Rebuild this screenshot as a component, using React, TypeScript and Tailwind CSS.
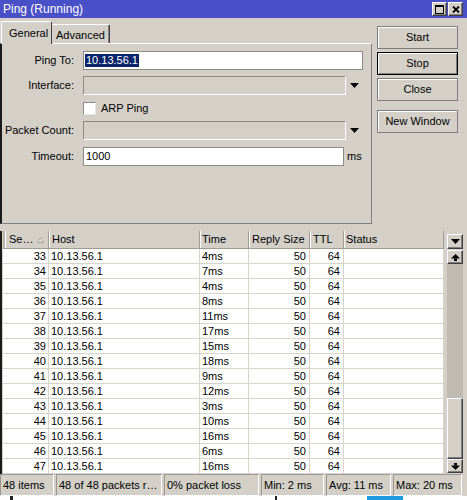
import React from "react";

const rows: [number, string][] = [
  [33, "4ms"], [34, "7ms"], [35, "4ms"], [36, "8ms"], [37, "11ms"],
  [38, "17ms"], [39, "15ms"], [40, "18ms"], [41, "9ms"], [42, "12ms"],
  [43, "3ms"], [44, "10ms"], [45, "16ms"], [46, "6ms"], [47, "16ms"],
];

const DropTri = () => (
  <svg width="9" height="5" viewBox="0 0 9 5" className="block">
    <polygon points="0,0 9,0 4.5,5" fill="#000" />
  </svg>
);

const ScrollArrow = ({ up }: { up?: boolean }) => (
  <svg width="9" height="7" viewBox="0 0 9 7" className="block">
    {up ? (
      <>
        <polygon points="4.5,0 9,4.5 0,4.5" fill="#000" />
        <rect x="3" y="4.5" width="3" height="2.5" fill="#000" />
      </>
    ) : (
      <>
        <rect x="3" y="0" width="3" height="2.5" fill="#000" />
        <polygon points="0,2.5 9,2.5 4.5,7" fill="#000" />
      </>
    )}
  </svg>
);

const raised =
  "border border-t-white border-l-white border-r-[#404040] border-b-[#404040] shadow-[inset_-1px_-1px_0_#808080]";

function FormButton({ label, focused }: { label: string; focused?: boolean }) {
  return (
    <div
      className={
        "h-[23px] w-[81px] flex items-center justify-center bg-[#d4d0c8] " +
        (focused
          ? "border border-black shadow-[inset_1px_1px_0_#fff,inset_-1px_-1px_0_#808080]"
          : "border border-[#7c7c7c] shadow-[inset_1px_1px_0_#fff]")
      }
    >
      {label}
    </div>
  );
}

export default function App() {
  return (
    <div className="w-[467px] h-[500px] bg-[#d4d0c8] flex flex-col overflow-hidden font-['Liberation_Sans',Arial,sans-serif] text-[11px] leading-none text-black select-none">
      {/* Title bar */}
      <div className="h-[18px] shrink-0 bg-[#4a50c8] flex items-center pl-[3px] pr-[4px]">
        <span className="text-white text-[12px]">Ping (Running)</span>
        <div className="ml-auto flex gap-[1px]">
          <div className={"w-[15px] h-[14px] bg-[#d4d0c8] flex items-center justify-center " + raised}>
            <svg width="9" height="9" viewBox="0 0 9 9" className="block">
              <rect x="0.5" y="0.5" width="8" height="8" fill="none" stroke="#000" />
              <rect x="0" y="0" width="9" height="2" fill="#000" />
            </svg>
          </div>
          <div className={"w-[15px] h-[14px] bg-[#d4d0c8] flex items-center justify-center " + raised}>
            <svg width="8" height="7" viewBox="0 0 8 7" className="block">
              <path d="M1 0.5 L7 6.5 M7 0.5 L1 6.5" stroke="#000" strokeWidth="1.8" />
            </svg>
          </div>
        </div>
      </div>

      {/* Top area */}
      <div className="flex h-[206px] shrink-0">
        <div className="w-[372px] flex flex-col">
          {/* Tabs */}
          <div className="h-[25px] flex items-end relative z-10">
            <div className="ml-[1px] w-[51px] h-[23px] -mb-px bg-[#d4d0c8] border-t border-l border-t-white border-l-white border-r border-r-[#404040] rounded-tl-[2px] rounded-tr-[2px] pl-[7px] pt-[6px]">
              General
            </div>
            <div className="w-[58px] h-[19px] bg-[#d4d0c8] border-t border-t-white border-r border-r-[#404040] shadow-[inset_-1px_0_0_#808080] rounded-tr-[2px] pl-[4px] pt-[5px]">
              Advanced
            </div>
          </div>
          {/* Panel */}
          <div className="h-[181px] border-t border-t-white border-r border-r-[#808080] border-b border-b-[#808080] border-l-2 border-l-[#1a1a1a] flex flex-col pt-[7px]">
            {/* Ping To */}
            <div className="flex items-center h-[19px]">
              <div className="w-[72px] text-right">Ping To:</div>
              <div className="ml-[9px] w-[280px] h-[19px] bg-white border border-[#8e8a83] flex items-center pl-[1px]">
                <span className="bg-[#0a246a] text-white px-[1px] h-[13px] flex items-center">10.13.56.1</span>
              </div>
            </div>
            {/* Interface */}
            <div className="flex items-center h-[19px] mt-[6px]">
              <div className="w-[72px] text-right">Interface:</div>
              <div className="ml-[9px] w-[263px] h-[19px] bg-[#d4d0c8] border border-t-[#8e8a83] border-l-[#8e8a83] border-r-white border-b-white" />
              <div className="ml-[4px]">
                <DropTri />
              </div>
            </div>
            {/* ARP Ping */}
            <div className="flex items-center h-[13px] mt-[7px]">
              <div className="ml-[81px] w-[13px] h-[13px] bg-white border border-t-[#8e8a83] border-l-[#8e8a83] border-r-[#e8e6e2] border-b-[#e8e6e2]" />
              <span className="ml-[5px]">ARP Ping</span>
            </div>
            {/* Packet Count */}
            <div className="flex items-center h-[19px] mt-[6px]">
              <div className="w-[72px] text-right">Packet Count:</div>
              <div className="ml-[9px] w-[263px] h-[19px] bg-[#d4d0c8] border border-t-[#8e8a83] border-l-[#8e8a83] border-r-white border-b-white" />
              <div className="ml-[4px]">
                <DropTri />
              </div>
            </div>
            {/* Timeout */}
            <div className="flex items-center h-[19px] mt-[7px]">
              <div className="w-[72px] text-right">Timeout:</div>
              <div className="ml-[9px] w-[261px] h-[19px] bg-white border border-[#8e8a83] flex items-center pl-[2px]">
                1000
              </div>
              <span className="ml-[3px]">ms</span>
            </div>
          </div>
        </div>
        {/* Right buttons */}
        <div className="pl-[5px] pt-[8px] flex flex-col">
          <FormButton label="Start" />
          <div className="mt-[3px]">
            <FormButton label="Stop" focused />
          </div>
          <div className="mt-[3px]">
            <FormButton label="Close" />
          </div>
          <div className="mt-[9px]">
            <FormButton label="New Window" />
          </div>
        </div>
      </div>

      {/* Table */}
      <div className="mt-[7px] h-[243px] shrink-0 flex border-l-2 border-l-[#1a1a1a]">
        <div className="ml-[1px] w-[441px] flex flex-col">
          <div className="grid grid-cols-[46px_151px_49px_61px_34px_100px] h-[18px] border-b border-b-[#a09c94] bg-[#d4d0c8]">
            <div className="flex items-center justify-between pl-[4px] pr-[4px] border-l-2 border-l-[#b8b4ac] border-r border-r-[#a09c94] shadow-[inset_1px_0_0_#fff]">
              <span>Se…</span>
              <svg width="7" height="6" viewBox="0 0 7 6" className="block">
                <polygon points="3.5,0.5 6.5,5.5 0.5,5.5" fill="#e2dfd8" stroke="#a8a49c" strokeWidth="1" />
              </svg>
            </div>
            <div className="flex items-center pl-[3px] border-r border-r-[#a09c94] shadow-[inset_1px_0_0_#fff]">Host</div>
            <div className="flex items-center pl-[2px] border-r border-r-[#a09c94] shadow-[inset_1px_0_0_#fff]">Time</div>
            <div className="flex items-center pl-[3px] border-r border-r-[#a09c94] shadow-[inset_1px_0_0_#fff]">Reply Size</div>
            <div className="flex items-center pl-[3px] border-r border-r-[#a09c94] shadow-[inset_1px_0_0_#fff]">TTL</div>
            <div className="flex items-center pl-[2px] border-r border-r-[#a09c94] shadow-[inset_1px_0_0_#fff]">Status</div>
          </div>
          <div className="flex-1 bg-white flex flex-col">
            {rows.map(([n, t]) => (
              <div
                key={n}
                className="grid grid-cols-[46px_151px_49px_61px_34px_100px] h-[15px] border-b border-b-[#d8d4cc]"
              >
                <div className="flex items-center justify-end pr-[2px] border-r border-r-[#d8d4cc]">{n}</div>
                <div className="flex items-center pl-[2px] border-r border-r-[#d8d4cc]">10.13.56.1</div>
                <div className="flex items-center pl-[2px] border-r border-r-[#d8d4cc]">{t}</div>
                <div className="flex items-center justify-end pr-[3px] border-r border-r-[#d8d4cc]">50</div>
                <div className="flex items-center justify-end pr-[3px] border-r border-r-[#d8d4cc]">64</div>
                <div className="border-r border-r-[#d8d4cc]" />
              </div>
            ))}
          </div>
        </div>
        {/* scroll column */}
        <div className="ml-[3px] w-[16px] flex flex-col pt-[3px] pb-[1px]">
          <div className={"h-[15px] bg-[#d4d0c8] flex items-center justify-center " + raised}>
            <DropTri />
          </div>
          <div className={"mt-[1px] h-[14px] bg-[#d4d0c8] flex items-center justify-center " + raised}>
            <ScrollArrow up />
          </div>
          <div className="flex-1 bg-[#bfbbb3]" />
          <div className={"h-[61px] bg-[#d4d0c8] " + raised} />
          <div className={"h-[14px] bg-[#d4d0c8] flex items-center justify-center " + raised}>
            <ScrollArrow />
          </div>
        </div>
      </div>

      {/* Status bar */}
      <div className="h-[22px] shrink-0 flex gap-[2px]">
        {[
          ["48 items", "w-[54px]"],
          ["48 of 48 packets r…", "w-[106px]"],
          ["0% packet loss", "w-[95px]"],
          ["Min: 2 ms", "w-[63px]"],
          ["Avg: 11 ms", "w-[65px]"],
          ["Max: 20 ms", "w-[69px]"],
        ].map(([txt, w]) => (
          <div
            key={txt}
            className={
              w +
              " h-full flex items-center pl-[2px] whitespace-nowrap overflow-hidden border border-t-[#9c988f] border-l-[#9c988f] border-r-white border-b-white"
            }
          >
            {txt}
          </div>
        ))}
      </div>
      {/* Strip below (window behind) */}
      <div className="h-[4px] shrink-0 bg-white flex">
        <div className="ml-[10px] w-[3px] bg-[#222]" />
        <div className="ml-[262px] w-[2px] bg-[#222]" />
        <div className="ml-[90px] w-[36px] bg-[#1e9be0]" />
      </div>
    </div>
  );
}
